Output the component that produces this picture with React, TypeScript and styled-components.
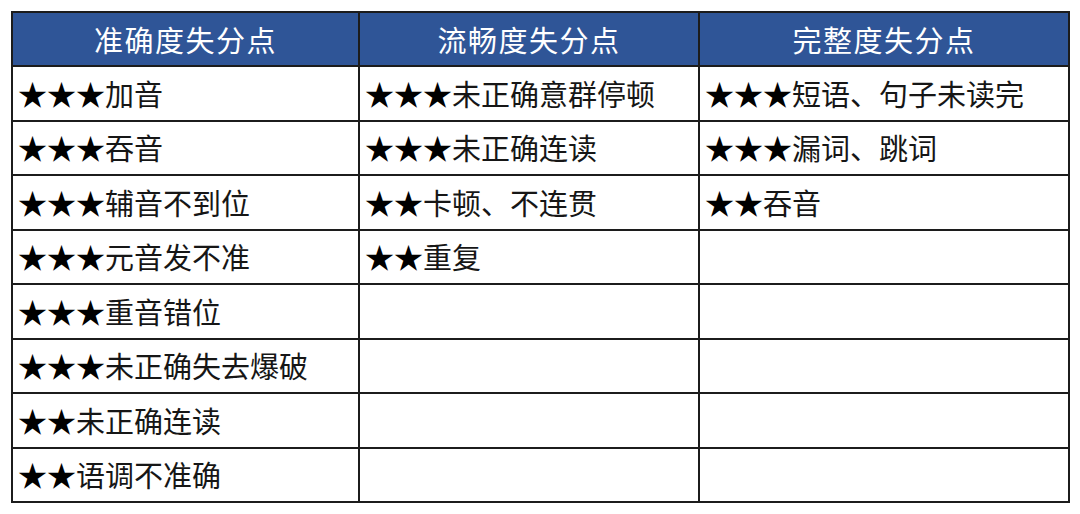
import React from "react";
import styled, { createGlobalStyle } from "styled-components";

const Global = createGlobalStyle`
  html, body { margin: 0; padding: 0; background: #ffffff; }
  body { font-family: "Noto Sans CJK SC", "Noto Sans", sans-serif; }
`;

const Page = styled.div`
  padding: 11px 12px 0 11px;
  width: 1080px;
  height: 514px;
  box-sizing: border-box;
`;

const Table = styled.table`
  border-collapse: collapse;
  width: 1057px;
  table-layout: fixed;
  border: 2px solid #1c1c1c;
`;

const HeadCell = styled.th`
  background: #2f5597;
  color: #ffffff;
  font-family: "Noto Sans CJK SC", sans-serif;
  font-weight: 400;
  font-size: 29px;
  letter-spacing: 1.5px;
  height: 52px;
  padding: 0;
  border: 2px solid #1c1c1c;
  text-align: center;
  vertical-align: middle;
  line-height: 1;
`;

const Cell = styled.td`
  font-family: "Noto Sans CJK SC", sans-serif;
  font-size: 29px;
  color: #161616;
  height: 52.5px;
  padding: 0 0 0 5px;
  border: 2px solid #1c1c1c;
  vertical-align: middle;
  white-space: nowrap;
  line-height: 1;
`;

const Stars = styled.span`
  color: #000000;
`;

const headers = ["准确度失分点", "流畅度失分点", "完整度失分点"];

type Item = { stars: number; text: string } | null;

const columns: Item[][] = [
  [
    { stars: 3, text: "加音" },
    { stars: 3, text: "吞音" },
    { stars: 3, text: "辅音不到位" },
    { stars: 3, text: "元音发不准" },
    { stars: 3, text: "重音错位" },
    { stars: 3, text: "未正确失去爆破" },
    { stars: 2, text: "未正确连读" },
    { stars: 2, text: "语调不准确" },
  ],
  [
    { stars: 3, text: "未正确意群停顿" },
    { stars: 3, text: "未正确连读" },
    { stars: 2, text: "卡顿、不连贯" },
    { stars: 2, text: "重复" },
    null,
    null,
    null,
    null,
  ],
  [
    { stars: 3, text: "短语、句子未读完" },
    { stars: 3, text: "漏词、跳词" },
    { stars: 2, text: "吞音" },
    null,
    null,
    null,
    null,
    null,
  ],
];

const widths = [347, 340, 370];

export default function App() {
  return (
    <>
      <Global />
      <Page>
        <Table>
          <colgroup>
            {widths.map((w, i) => (
              <col key={i} style={{ width: w }} />
            ))}
          </colgroup>
          <thead>
            <tr>
              {headers.map((h) => (
                <HeadCell key={h}>{h}</HeadCell>
              ))}
            </tr>
          </thead>
          <tbody>
            {Array.from({ length: 8 }).map((_, r) => (
              <tr key={r}>
                {columns.map((col, c) => {
                  const item = col[r];
                  return (
                    <Cell key={c}>
                      {item ? (
                        <>
                          <Stars>{"★".repeat(item.stars)}</Stars>
                          {item.text}
                        </>
                      ) : null}
                    </Cell>
                  );
                })}
              </tr>
            ))}
          </tbody>
        </Table>
      </Page>
    </>
  );
}
